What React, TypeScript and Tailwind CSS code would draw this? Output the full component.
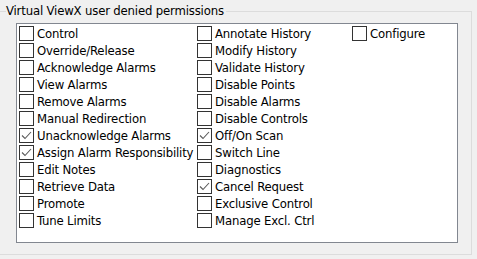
const col1: [string, boolean][] = [
  ["Control", false],
  ["Override/Release", false],
  ["Acknowledge Alarms", false],
  ["View Alarms", false],
  ["Remove Alarms", false],
  ["Manual Redirection", false],
  ["Unacknowledge Alarms", true],
  ["Assign Alarm Responsibility", true],
  ["Edit Notes", false],
  ["Retrieve Data", false],
  ["Promote", false],
  ["Tune Limits", false],
];

const col2: [string, boolean][] = [
  ["Annotate History", false],
  ["Modify History", false],
  ["Validate History", false],
  ["Disable Points", false],
  ["Disable Alarms", false],
  ["Disable Controls", false],
  ["Off/On Scan", true],
  ["Switch Line", false],
  ["Diagnostics", false],
  ["Cancel Request", true],
  ["Exclusive Control", false],
  ["Manage Excl. Ctrl", false],
];

const col3: [string, boolean][] = [["Configure", false]];

function Check({ label, checked }: { label: string; checked: boolean }) {
  return (
    <div className="flex h-[17px] items-start">
      <span className="flex h-[15px] w-[15px] shrink-0 items-center justify-center border border-[#333333] bg-white">
        {checked && (
          <svg width="13" height="13" viewBox="0 0 13 13" fill="none">
            <path d="M2 6.5 L5 9.5 L11 3" stroke="#5a5a5a" strokeWidth="1.1" />
          </svg>
        )}
      </span>
      <span className="ml-[3px] text-[13px] leading-[15px] tracking-[-0.17px] text-black whitespace-nowrap">
        {label}
      </span>
    </div>
  );
}

function Column({ items, width }: { items: [string, boolean][]; width: string }) {
  return (
    <div className={`flex flex-col ${width}`}>
      {items.map(([label, checked]) => (
        <Check key={label} label={label} checked={checked} />
      ))}
    </div>
  );
}

export default function App() {
  return (
    <div
      className="relative h-[259px] w-[477px] overflow-hidden bg-[#f0f0f0]"
      style={{ fontFamily: '"DejaVu Sans Condensed", "DejaVu Sans", sans-serif' }}
    >
      <div className="absolute left-[6px] top-[3px] bg-[#f0f0f0] pr-[2px] text-[13px] leading-[16px] tracking-[-0.17px] text-black">
        Virtual ViewX user denied permissions
      </div>
      <div className="mt-[11px] h-[244px] w-[472px] border-b border-r border-t border-[#dcdcdc] pl-[16px] pt-[11px]">
        <div className="flex h-[220px] w-[442px] border border-[#828790] bg-white pl-[2px] pt-[2px]">
          <Column items={col1} width="w-[178px]" />
          <Column items={col2} width="w-[155px]" />
          <Column items={col3} width="w-[90px]" />
        </div>
      </div>
    </div>
  );
}
